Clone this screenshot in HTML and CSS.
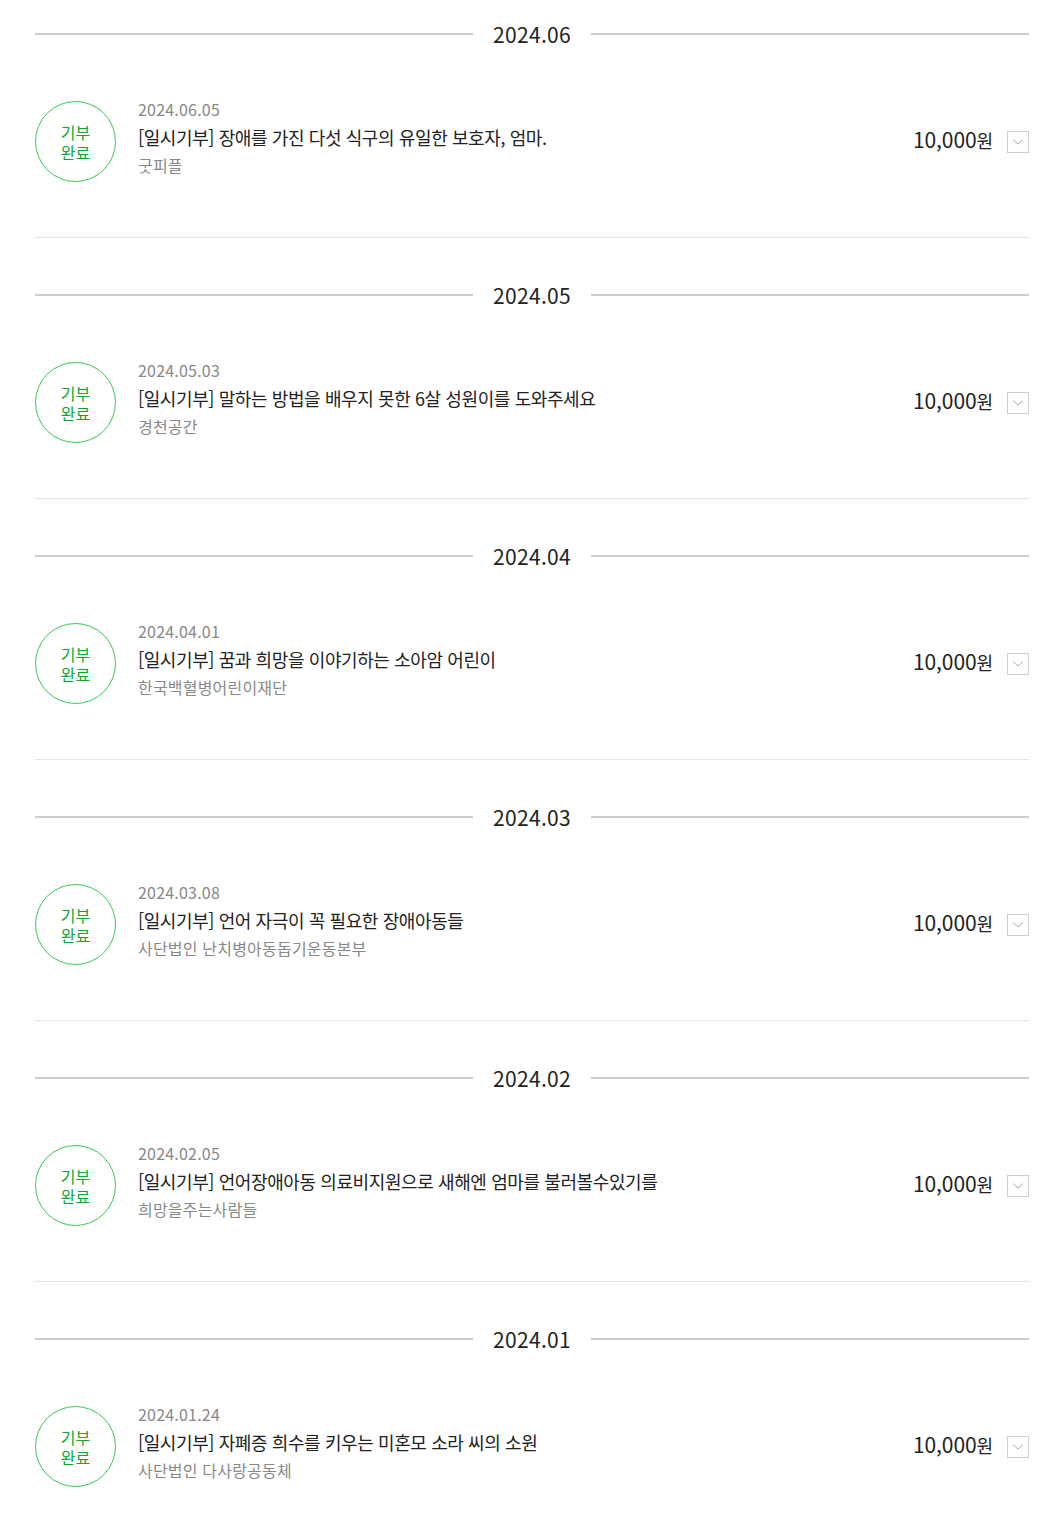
FILE: index.html
```html
<!DOCTYPE html>
<html lang="ko">
<head>
    <meta charset="UTF-8">
    <meta name="viewport" content="width=device-width, initial-scale=1.0">
    <title>기부내역</title>
    <link rel="stylesheet" href="styles.css">
</head>
<body>
    <div class="history">
        <section class="month">
            <h2 class="month-title"><span>2024.06</span></h2>
            <div class="donation">
                <div class="badge">기부<br>완료</div>
                <div class="info">
                    <p class="date">2024.06.05</p>
                    <p class="title">[일시기부] 장애를 가진 다섯 식구의 유일한 보호자, 엄마.</p>
                    <p class="org">굿피플</p>
                </div>
                <div class="amount">10,000<span class="won">원</span></div>
                <button class="toggle" aria-label="상세보기"><svg width="12" height="8" viewBox="0 0 12 8"><path d="M1 1.5 L6 6 L11 1.5" fill="none" stroke="#aaa" stroke-width="1"/></svg></button>
            </div>
        </section>

        <section class="month">
            <h2 class="month-title"><span>2024.05</span></h2>
            <div class="donation">
                <div class="badge">기부<br>완료</div>
                <div class="info">
                    <p class="date">2024.05.03</p>
                    <p class="title">[일시기부] 말하는 방법을 배우지 못한 6살 성원이를 도와주세요</p>
                    <p class="org">경천공간</p>
                </div>
                <div class="amount">10,000<span class="won">원</span></div>
                <button class="toggle" aria-label="상세보기"><svg width="12" height="8" viewBox="0 0 12 8"><path d="M1 1.5 L6 6 L11 1.5" fill="none" stroke="#aaa" stroke-width="1"/></svg></button>
            </div>
        </section>

        <section class="month">
            <h2 class="month-title"><span>2024.04</span></h2>
            <div class="donation">
                <div class="badge">기부<br>완료</div>
                <div class="info">
                    <p class="date">2024.04.01</p>
                    <p class="title">[일시기부] 꿈과 희망을 이야기하는 소아암 어린이</p>
                    <p class="org">한국백혈병어린이재단</p>
                </div>
                <div class="amount">10,000<span class="won">원</span></div>
                <button class="toggle" aria-label="상세보기"><svg width="12" height="8" viewBox="0 0 12 8"><path d="M1 1.5 L6 6 L11 1.5" fill="none" stroke="#aaa" stroke-width="1"/></svg></button>
            </div>
        </section>

        <section class="month">
            <h2 class="month-title"><span>2024.03</span></h2>
            <div class="donation">
                <div class="badge">기부<br>완료</div>
                <div class="info">
                    <p class="date">2024.03.08</p>
                    <p class="title">[일시기부] 언어 자극이 꼭 필요한 장애아동들</p>
                    <p class="org">사단법인 난치병아동돕기운동본부</p>
                </div>
                <div class="amount">10,000<span class="won">원</span></div>
                <button class="toggle" aria-label="상세보기"><svg width="12" height="8" viewBox="0 0 12 8"><path d="M1 1.5 L6 6 L11 1.5" fill="none" stroke="#aaa" stroke-width="1"/></svg></button>
            </div>
        </section>

        <section class="month">
            <h2 class="month-title"><span>2024.02</span></h2>
            <div class="donation">
                <div class="badge">기부<br>완료</div>
                <div class="info">
                    <p class="date">2024.02.05</p>
                    <p class="title">[일시기부] 언어장애아동 의료비지원으로 새해엔 엄마를 불러볼수있기를</p>
                    <p class="org">희망을주는사람들</p>
                </div>
                <div class="amount">10,000<span class="won">원</span></div>
                <button class="toggle" aria-label="상세보기"><svg width="12" height="8" viewBox="0 0 12 8"><path d="M1 1.5 L6 6 L11 1.5" fill="none" stroke="#aaa" stroke-width="1"/></svg></button>
            </div>
        </section>

        <section class="month">
            <h2 class="month-title"><span>2024.01</span></h2>
            <div class="donation">
                <div class="badge">기부<br>완료</div>
                <div class="info">
                    <p class="date">2024.01.24</p>
                    <p class="title">[일시기부] 자폐증 희수를 키우는 미혼모 소라 씨의 소원</p>
                    <p class="org">사단법인 다사랑공동체</p>
                </div>
                <div class="amount">10,000<span class="won">원</span></div>
                <button class="toggle" aria-label="상세보기"><svg width="12" height="8" viewBox="0 0 12 8"><path d="M1 1.5 L6 6 L11 1.5" fill="none" stroke="#aaa" stroke-width="1"/></svg></button>
            </div>
        </section>
    </div>
</body>
</html>
```

FILE: styles.css
```css
body {
    margin: 0;
    background: #fff;
    font-family: "Noto Sans CJK KR", "Noto Sans", sans-serif;
    color: #222;
}

.history {
    width: 994px;
    margin-left: 35px;
    padding-top: 23px;
}

.month {
    border-bottom: 1px solid #e5e5e5;
    margin-bottom: 46px;
}

.month-title {
    display: flex;
    align-items: center;
    gap: 20px;
    margin: 0;
    height: 22px;
    font-size: 21px;
    font-weight: 400;
    line-height: 22px;
    color: #222;
    letter-spacing: 0.3px;
}

/* lines on both sides of the month */
.month-title::before,
.month-title::after {
    content: "";
    flex: 1;
    height: 2px;
    background: #cdcdcd;
}

.donation {
    display: flex;
    align-items: center;
    padding: 56px 0 55px;
}

.badge {
    width: 81px;
    height: 81px;
    box-sizing: border-box;
    border: 1px solid #35c854;
    border-radius: 50%;
    display: flex;
    align-items: center;
    justify-content: center;
    text-align: center;
    font-size: 16px;
    line-height: 20px;
    color: #0aa82e;
    flex-shrink: 0;
}

.info {
    flex: 1;
    align-self: flex-start;
    margin-top: -2px;
    margin-left: 22px;
}

.info p {
    margin: 0;
}

.date {
    font-size: 16px;
    line-height: 20px;
    color: #888;
    letter-spacing: 0.2px;
}

.title {
    font-size: 18px;
    line-height: 36px;
    color: #222;
    letter-spacing: -0.4px;
}

.org {
    font-size: 16px;
    line-height: 20px;
    color: #888;
    letter-spacing: 0.2px;
}

.amount {
    margin-bottom: 5px;
    font-size: 21px;
    line-height: 26px;
    color: #222;
    letter-spacing: -0.1px;
}

.won {
    font-size: 18px;
}

.toggle {
    width: 22px;
    height: 22px;
    margin-left: 14px;
    padding: 0;
    border: 1px solid #cfcfcf;
    background: #fff;
    display: flex;
    align-items: center;
    justify-content: center;
    cursor: pointer;
}
```
